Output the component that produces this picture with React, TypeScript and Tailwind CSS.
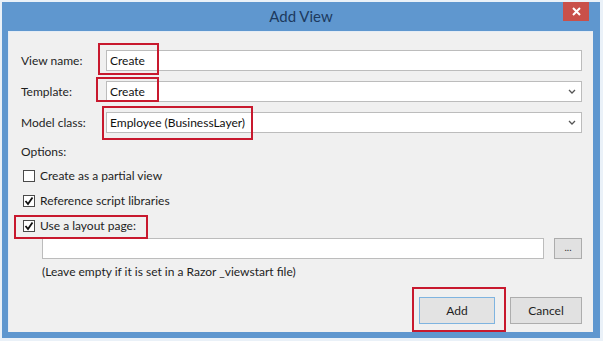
import React from "react";

const font = { fontFamily: "Lato, 'Noto Sans', sans-serif" };

function Chevron() {
  return (
    <svg width="8" height="5" viewBox="0 0 8 5" className="mr-[5px]">
      <polyline points="1,1 4,4 7,1" fill="none" stroke="#555" strokeWidth="1.3" />
    </svg>
  );
}

function Check({ checked }: { checked: boolean }) {
  return (
    <div className="w-[12px] h-[12px] border border-[#4a4a4a] bg-white flex items-center justify-center">
      {checked && (
        <svg width="10" height="10" viewBox="0 0 10 10">
          <polyline points="1.5,5 4,8 8.5,1.5" fill="none" stroke="#111" strokeWidth="1.8" />
        </svg>
      )}
    </div>
  );
}

function Row({ label, value, dropdown }: { label: string; value: string; dropdown?: boolean }) {
  return (
    <div className="flex items-center h-[21px]">
      <div className="w-[85px] text-[12px] text-[#1e1e1e]">{label}</div>
      <div className="flex-1 h-[21px] border border-[#bcbcbc] bg-white flex items-center justify-between pl-[3px] text-[12px] text-[#111]">
        <span>{value}</span>
        {dropdown && <Chevron />}
      </div>
    </div>
  );
}

function CbRow({ checked, label }: { checked: boolean; label: string }) {
  return (
    <div className="flex items-center h-[16px] ml-[2px] gap-[5px] text-[12px] text-[#1e1e1e]">
      <Check checked={checked} />
      <span>{label}</span>
    </div>
  );
}

export default function App() {
  return (
    <div className="relative w-[603px] h-[341px] bg-[#eaf1f8] p-[2px]" style={font}>
      <div className="w-[598px] h-[336px] bg-[#5f97cf] flex flex-col">
        <div className="relative h-[29px] flex items-center justify-center text-[15px] text-[#1d3a5e]">
          Add View
          <div className="absolute right-[11px] top-0 w-[26px] h-[19px] bg-[#c9504a] flex items-center justify-center">
            <svg width="9" height="9" viewBox="0 0 9 9">
              <path d="M1 1 L8 8 M8 1 L1 8" stroke="white" strokeWidth="2" />
            </svg>
          </div>
        </div>
        <div className="ml-[6px] mr-[7px] mb-[6px] flex-1 bg-[#f0f0f0] border-t border-l border-[#e4ecf5] pl-[12px] pr-[11px] pt-[18px] flex flex-col">
          <Row label="View name:" value="Create" />
          <div className="mt-[10px]">
            <Row label="Template:" value="Create" dropdown />
          </div>
          <div className="mt-[10px]">
            <Row label="Model class:" value="Employee (BusinessLayer)" dropdown />
          </div>
          <div className="mt-[11px] h-[16px] flex items-center text-[12px] text-[#1e1e1e]">Options:</div>
          <div className="mt-[8px]">
            <CbRow checked={false} label="Create as a partial view" />
          </div>
          <div className="mt-[9px]">
            <CbRow checked label="Reference script libraries" />
          </div>
          <div className="mt-[9px]">
            <CbRow checked label="Use a layout page:" />
          </div>
          <div className="mt-[4px] ml-[21px] flex items-center gap-[10px]">
            <div className="flex-1 h-[21px] border border-[#bcbcbc] bg-white" />
            <div className="w-[28px] h-[21px] border border-[#acacac] bg-[#e1e1e1] flex items-center justify-center text-[10px] text-[#333] leading-none pb-[4px]">
              ...
            </div>
          </div>
          <div className="mt-[5px] ml-[21px] h-[16px] flex items-center text-[12px] text-[#1e1e1e]">
            (Leave empty if it is set in a Razor _viewstart file)
          </div>
          <div className="mt-[17px] flex justify-end gap-[15px]">
            <div className="w-[76px] h-[27px] border border-[#7fb4e0] bg-[#e3e3e3] flex items-center justify-center text-[12px] text-[#1e1e1e]">
              Add
            </div>
            <div className="w-[72px] h-[27px] border border-[#adadad] bg-[#e1e1e1] flex items-center justify-center text-[12px] text-[#1e1e1e]">
              Cancel
            </div>
          </div>
        </div>
      </div>

      <div className="absolute left-[98px] top-[43px] w-[61px] h-[32px] border-2 border-[#c8192e]" />
      <div className="absolute left-[96px] top-[77px] w-[63px] h-[25px] border-2 border-[#c8192e]" />
      <div className="absolute left-[102px] top-[106px] w-[151px] h-[34px] border-2 border-[#c8192e]" />
      <div className="absolute left-[14px] top-[215px] w-[134px] h-[24px] border-2 border-[#c8192e]" />
      <div className="absolute left-[412px] top-[287px] w-[94px] h-[45px] border-2 border-[#c8192e]" />
    </div>
  );
}
